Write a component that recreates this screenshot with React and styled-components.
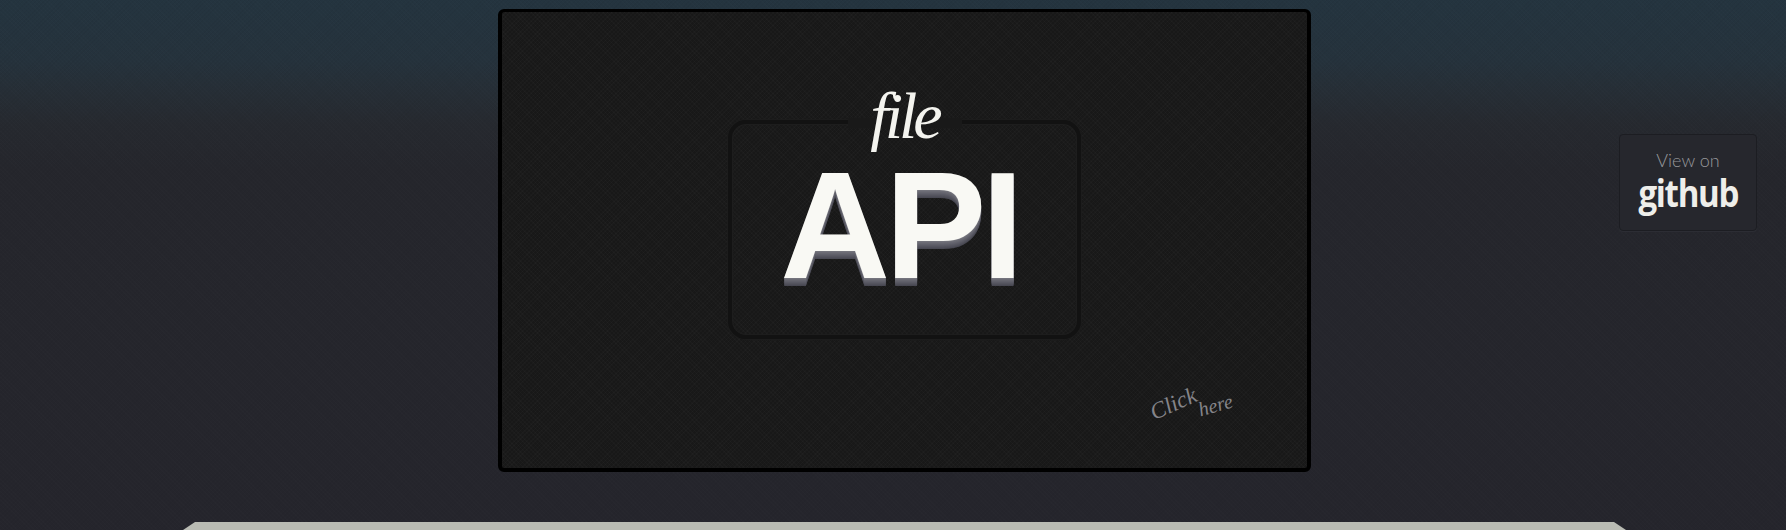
import React from "react";
import styled, { createGlobalStyle } from "styled-components";

const Global = createGlobalStyle`
  html, body { margin: 0; padding: 0; height: 100%; }
  body { background: #25252c; overflow: hidden; }
`;

const Page = styled.div`
  width: 1786px;
  height: 530px;
  overflow: hidden;
  display: flex;
  flex-direction: column;
  background-color: #25252c;
  background-image:
    repeating-linear-gradient(45deg, rgba(255,255,255,.008) 0 1px, transparent 1px 3px),
    repeating-linear-gradient(-45deg, rgba(0,0,0,.03) 0 1px, transparent 1px 3px),
    linear-gradient(180deg, #24343f 0, #25323c 60px, #262e36 90px, #26292f 125px, #25262c 170px, #25252c 100%);
`;

const TopRow = styled.div`
  display: flex;
  align-items: flex-start;
  gap: 308px;
  padding: 9px 0 0 498px;
`;

const Card = styled.main`
  flex: none;
  width: 813px;
  height: 463px;
  box-sizing: border-box;
  border: 4px solid #000;
  border-top-width: 3px;
  border-radius: 6px;
  background-color: #181818;
  background-image:
    repeating-linear-gradient(45deg, rgba(255,255,255,.016) 0 1px, transparent 1px 3px),
    repeating-linear-gradient(-45deg, rgba(255,255,255,.016) 0 1px, transparent 1px 3px);
  display: flex;
  flex-direction: column;
  align-items: center;
  padding-top: 108px;
`;

const Frame = styled.div`
  position: relative;
  flex: none;
  width: 353px;
  height: 219px;
  box-sizing: border-box;
  border: 4px solid #121212;
  border-radius: 18px;
  box-shadow: 0 0 0 1px #1c1c1c, inset 0 0 1px 1px #1f1f1f;
  display: flex;
  justify-content: center;
  padding-top: 44px;
`;

const FileLabel = styled.div`
  position: absolute;
  top: -6px;
  left: 50%;
  transform: translateX(-50%);
  width: 114px;
  height: 10px;
  background: #191919;
  text-align: center;
  font: italic 400 66px/0 "Liberation Serif", serif;
  letter-spacing: -4px;
  color: #f4f4ef;
`;

const FileWord = styled.span`
  display: block;
  height: 0;
  margin-top: -2px;
`;

const ApiMark = styled.h1`
  margin: 0 10px 0 0;
  height: 114px;
  font: 700 152px/114px "Liberation Sans", sans-serif;
  letter-spacing: -5px;
  color: #f9f9f4;
  text-shadow:
    0 1px 0 #74747c, 0 2px 0 #6c6c75, 0 3px 0 #66666f, 0 4px 0 #60606a,
    0 5px 0 #5a5a64, 0 6px 0 #54545e, 0 7px 0 #4e4e58, 0 8px 0 #484852;
`;

const HintRow = styled.div`
  display: flex;
  align-items: flex-start;
  align-self: flex-end;
  gap: 1px;
  margin: 53px 74px 0 0;
  color: #85858a;
  font-family: "Liberation Serif", serif;
  font-style: italic;
  line-height: 1;
`;

const HintWord = styled.span`
  font-size: ${(p) => p.$size}px;
  margin-top: ${(p) => p.$drop}px;
  transform: rotate(${(p) => p.$deg}deg);
`;

const GithubButton = styled.a`
  flex: none;
  margin-top: 125px;
  width: 138px;
  height: 97px;
  box-sizing: border-box;
  border: 1px solid #1c1d22;
  border-radius: 4px;
  box-shadow: 0 1px 0 #2c2d34;
  background: #26272d;
  display: flex;
  flex-direction: column;
  align-items: center;
  padding-top: 14px;
  text-decoration: none;
`;

const ViewOn = styled.span`
  font: 300 18px/22px Lato, sans-serif;
  color: #96979b;
`;

const GithubWord = styled.span`
  font: 700 38px/42px "Open Sans", sans-serif;
  letter-spacing: -1.5px;
  color: #eeeeea;
  transform: scaleX(0.87);
`;

const Ledge = styled.div`
  flex: none;
  margin: auto 0 0 183px;
  width: 1443px;
  height: 8px;
  background: #b9bbb3;
  clip-path: polygon(12px 0, calc(100% - 12px) 0, 100% 100%, 0 100%);
`;

export default function App() {
  return (
    <Page>
      <Global />
      <TopRow>
        <Card>
          <Frame>
            <FileLabel><FileWord>file</FileWord></FileLabel>
            <ApiMark>API</ApiMark>
          </Frame>
          <HintRow>
            <HintWord $size={23} $drop={0} $deg={-24}>Click</HintWord>
            <HintWord $size={20} $drop={3} $deg={-16}>here</HintWord>
          </HintRow>
        </Card>
        <GithubButton href="#">
          <ViewOn>View on</ViewOn>
          <GithubWord>github</GithubWord>
        </GithubButton>
      </TopRow>
      <Ledge />
    </Page>
  );
}
